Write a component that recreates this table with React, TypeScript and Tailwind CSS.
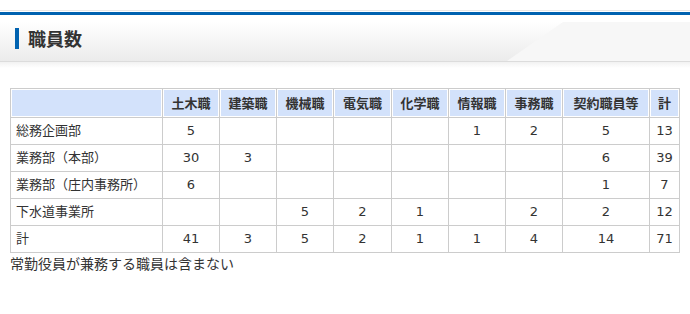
import React from "react";

const cols = ["土木職", "建築職", "機械職", "電気職", "化学職", "情報職", "事務職", "契約職員等", "計"];
const widths = [152, 57, 57, 57, 58, 57, 57, 57, 87, 30];

const rows: { name: string; v: (number | null)[] }[] = [
  { name: "総務企画部", v: [5, null, null, null, null, 1, 2, 5, 13] },
  { name: "業務部（本部）", v: [30, 3, null, null, null, null, null, 6, 39] },
  { name: "業務部（庄内事務所）", v: [6, null, null, null, null, null, null, 1, 7] },
  { name: "下水道事業所", v: [null, null, 5, 2, 1, null, 2, 2, 12] },
  { name: "計", v: [41, 3, 5, 2, 1, 1, 4, 14, 71] },
];

export default function App() {
  return (
    <div className="h-[314px] w-[690px] bg-white font-['DejaVu_Sans','Noto_Sans_CJK_JP',sans-serif] text-[13px] text-[#333]">
      {/* 見出し */}
      <div className="pt-[10px]">
        <div className="h-px bg-[#e6e6e6]" />
        <div className="mt-px h-[3px] bg-[#0062b0]" />
        <div className="relative flex h-[47px] items-center overflow-hidden border-b border-[#dcdcdc] bg-gradient-to-b from-white from-15% to-[#ebebeb]">
          <div className="absolute inset-0 bg-[#f7f7f7] [clip-path:polygon(563px_7px,100%_7px,100%_100%,507px_100%)]" />
          <div className="relative ml-[15px] h-[21px] w-[4px] bg-[#0062b0]" />
          <h2 className="relative ml-[9px] font-['Noto_Sans_CJK_JP',sans-serif] text-[18px] font-bold leading-none text-[#333]">
            職員数
          </h2>
        </div>
        <div className="h-[6px] bg-gradient-to-b from-[#f2f2f2] to-white" />
      </div>

      {/* 表 */}
      <div className="mt-[20px] px-[10px]">
        <table className="w-[670px] table-fixed border-collapse border border-[#ccc]">
          <colgroup>
            {widths.map((w, i) => (
              <col key={i} style={{ width: w }} />
            ))}
          </colgroup>
          <thead>
            <tr className="h-[28px]">
              <th className="border border-[#ccc] p-0">
                <div className="m-px h-[26px] bg-[#d3e2fb]" />
              </th>
              {cols.map((c) => (
                <th key={c} className="border border-[#ccc] p-0">
                  <div className="m-px flex h-[26px] items-center justify-center bg-[#d3e2fb] font-['Noto_Sans_CJK_JP',sans-serif] font-bold text-[#333]">
                    {c}
                  </div>
                </th>
              ))}
            </tr>
          </thead>
          <tbody>
            {rows.map((r) => (
              <tr key={r.name} className="h-[27px]">
                <td className="border border-[#ccc] px-[5px] py-0 text-left">{r.name}</td>
                {r.v.map((n, i) => (
                  <td key={i} className="border border-[#ccc] p-0 text-center">
                    {n ?? ""}
                  </td>
                ))}
              </tr>
            ))}
          </tbody>
        </table>
        <p className="mt-[3px] text-[14px] leading-[16px]">常勤役員が兼務する職員は含まない</p>
      </div>
    </div>
  );
}
